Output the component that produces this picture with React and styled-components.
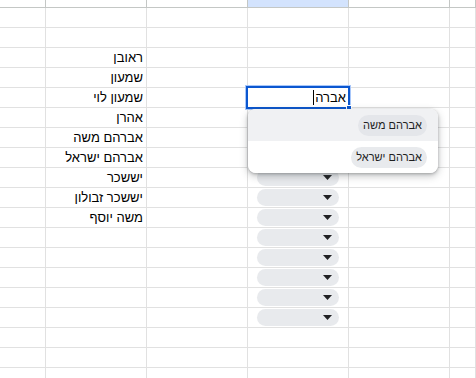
import React from "react";
import styled, { createGlobalStyle } from "styled-components";

const Global = createGlobalStyle`
  html, body { margin: 0; padding: 0; background: #fff; overflow: hidden; }
  body { font-family: "Liberation Sans", Arial, sans-serif; }
`;

const Sheet = styled.div`
  display: grid;
  grid-template-columns: 46px repeat(4, 101px) 1fr;
  grid-template-rows: 8px repeat(19, 20px);
  width: 476px;
  height: 378px;
  overflow: hidden;
`;

const Cell = styled.div`
  box-sizing: border-box;
  border-right: 1px solid #e1e1e1;
  border-bottom: 1px solid #e1e1e1;
  position: relative;
  display: flex;
  align-items: ${(p) => (p.$chip ? "flex-start" : "center")};
  justify-content: ${(p) => (p.$chip ? "flex-start" : "flex-end")};
  padding: ${(p) => (p.$chip ? "1px 0 0 9px" : "0 3px 0 0")};
  font-size: 13px;
  color: #000;
  white-space: nowrap;
`;

const CellText = styled.span`
  direction: rtl;
`;

const HeaderCell = styled.div`
  box-sizing: border-box;
  border-right: 1px solid #c4c7c5;
  border-bottom: 1px solid #c4c7c5;
  background: ${(p) => (p.$selected ? "#d3e3fd" : "#fff")};
`;

const Chip = styled.div`
  width: 82px;
  height: 17px;
  border-radius: 9px;
  background: #e8eaed;
  display: flex;
  align-items: center;
  justify-content: flex-end;
  padding-right: 7px;
  box-sizing: border-box;
`;

const Arrow = styled.svg`
  width: 9px;
  height: 5px;
  display: block;
`;

const ActiveBox = styled.div`
  position: absolute;
  left: -2px;
  top: -2px;
  width: 104px;
  height: 23px;
  box-sizing: border-box;
  border: 2px solid #0b57d0;
  box-shadow: 0 0 0 1px #a8c7fa;
  background: #fff;
  z-index: 4;
  display: flex;
  align-items: center;
  justify-content: flex-start;
  padding-right: 2px;
  direction: rtl;
  font-size: 13px;
  color: #000;
`;

const Caret = styled.span`
  display: inline-block;
  width: 1px;
  height: 15px;
  background: #000;
  margin-right: 1px;
`;

const FillHandle = styled.div`
  position: absolute;
  right: -4px;
  bottom: -4px;
  width: 4px;
  height: 4px;
  background: #0b57d0;
  border: 1px solid #fff;
`;

const Popup = styled.div`
  position: absolute;
  left: 0;
  top: 21px;
  width: 190px;
  background: #fff;
  border-radius: 8px;
  box-shadow: 0 1px 3px rgba(60, 64, 67, 0.35), 0 3px 7px 1px rgba(60, 64, 67, 0.25);
  overflow: hidden;
  z-index: 6;
  direction: rtl;
  display: flex;
  flex-direction: column;
`;

const Option = styled.div`
  height: 32px;
  display: flex;
  align-items: center;
  justify-content: flex-start;
  padding-right: 11px;
  background: ${(p) => (p.$active ? "#f0f1f3" : "#fff")};
`;

const OptionChip = styled.span`
  height: 21px;
  line-height: 21px;
  padding: 0 5px;
  border-radius: 11px;
  background: ${(p) => (p.$active ? "#e4e6ea" : "#e8eaed")};
  font-size: 11px;
  color: #1f1f1f;
  white-space: nowrap;
`;

const names = {
  3: "ראובן",
  4: "שמעון",
  5: "שמעון לוי",
  6: "אהרן",
  7: "אברהם משה",
  8: "אברהם ישראל",
  9: "יששכר",
  10: "יששכר זבולון",
  11: "משה יוסף",
};

function DropChip() {
  return (
    <Chip>
      <Arrow viewBox="0 0 9 5">
        <path d="M0 0 H9 L4.5 5 Z" fill="#202124" />
      </Arrow>
    </Chip>
  );
}

function Editor() {
  return (
    <>
      <ActiveBox>
        אברה<Caret />
        <FillHandle />
      </ActiveBox>
      <Popup>
        <Option $active>
          <OptionChip $active>אברהם משה</OptionChip>
        </Option>
        <Option>
          <OptionChip>אברהם ישראל</OptionChip>
        </Option>
      </Popup>
    </>
  );
}

export default function App() {
  const cells = [];
  for (let c = 0; c < 6; c++) {
    cells.push(<HeaderCell key={`h${c}`} $selected={c === 3} />);
  }
  for (let r = 1; r <= 19; r++) {
    for (let c = 0; c < 6; c++) {
      const isChip = c === 3 && r >= 6 && r <= 16;
      let content = null;
      if (c === 1 && names[r]) content = <CellText>{names[r]}</CellText>;
      if (c === 3 && r === 5) content = <Editor />;
      if (isChip) content = <DropChip />;
      cells.push(
        <Cell key={`${r}-${c}`} $chip={isChip}>
          {content}
        </Cell>
      );
    }
  }
  return (
    <>
      <Global />
      <Sheet>{cells}</Sheet>
    </>
  );
}
